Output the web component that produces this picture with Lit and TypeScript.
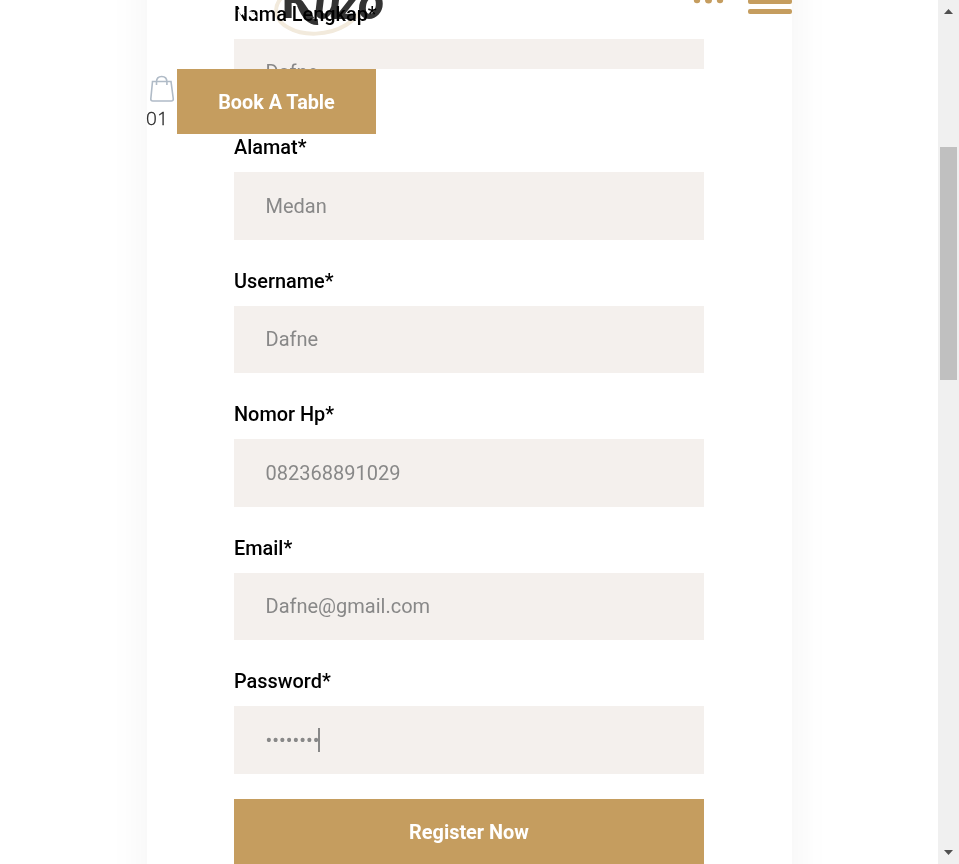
import { LitElement, html, css, svg } from "lit";
import { customElement } from "lit/decorators.js";

const fields = [
  { label: "Nama Lengkap*", value: "Dafne" },
  { label: "Alamat*", value: "Medan" },
  { label: "Username*", value: "Dafne" },
  { label: "Nomor Hp*", value: "082368891029" },
  { label: "Email*", value: "Dafne@gmail.com" },
  { label: "Password*", value: "••••••••", focused: true },
];

@customElement("app-root")
export class AppRoot extends LitElement {
  static styles = css`
    :host { display: block; position: relative; width: 100%; height: 864px; overflow: hidden; background: #fff;
      font-family: Roboto, "Liberation Sans", sans-serif; font-size: 20px; }
    * { box-sizing: border-box; }
    .page { display: flex; height: 100%; }
    .main { flex: 1; min-width: 0; overflow: hidden; display: flex; padding-left: 147px; }
    .card { flex: none; width: 645px; height: 1000px; margin-top: -60px; padding: 60px 88px 0 87px; box-shadow: 0 0 40px rgba(0,0,0,.05); }
    .form { display: flex; flex-direction: column; }
    .field { height: 133.5px; flex: none; }
    .label { height: 38.6px; line-height: 29.8px; color: #000; font-weight: 500; font-size: 19.9px; }
    .field:nth-child(even) .label { line-height: 28.8px; }
    .input { height: 67.5px; background: #f4f0ed; padding: 0 31.5px; display: flex; align-items: center; color: #888; font-size: 20px; }
    .first .input { height: 30px; align-items: flex-start; overflow: hidden; line-height: 67.5px; }
    .caret { width: 2px; height: 24px; background: #888; margin-left: -1px; }
    .submit { height: 66px; margin-top: -2px; background: #c59d5f; color: #fff; font-weight: 700; display: flex; align-items: center; justify-content: center; font-size: 19.9px; }
    .header { position: absolute; left: 147px; top: 0; width: 645px; height: 134px; }
    .brand { position: absolute; left: 230px; top: 0; mix-blend-mode: multiply; }
    .leaf { position: absolute; left: 83px; top: 0; }
    .menu { position: absolute; left: 543px; top: 0; }
    .actions { position: absolute; left: 0; top: 69px; display: flex; }
    .cart { width: 30px; padding-top: 6px; color: #222; font: 400 19px/30px "Open Sans", sans-serif; }
    .cart svg { display: block; margin-left: 2px; }
    .count { display: block; margin-left: -1px; font-weight: 300; letter-spacing: .5px; -webkit-text-stroke: .3px #222; }
    .book { width: 199px; height: 65px; padding-top: 1px; background: #c59d5f; color: #fff; font-weight: 700; font-size: 19.8px; display: flex; align-items: center; justify-content: center; }
    .scroll { width: 21px; background: #f0f0f0; display: flex; flex-direction: column; align-items: center; padding: 9px 0 9px; }
    .thumb { width: 17px; height: 233px; background: #c0c0c0; margin: 133px 0 auto; }
    .scroll svg { display: block; flex: none; }
  `;

  brand() {
    return html`<svg class="brand" width="170" height="40" viewBox="230 0 170 40">
      <path d="M282-3C272 8 275 21 289 28C303 36 328 36 346 25C357 18 364 9 365-2" fill="none" stroke="#f2eadc" stroke-width="4"/>
      <g fill="#333" font-family="Lato, sans-serif" font-weight="900">
        <text x="281" y="18" font-size="47">K</text>
        <text x="314 337 358" y="19" font-style="italic" font-size="50">uzo</text>
      </g>
      <path d="M300 5Q307 23 318 22" fill="none" stroke="#333" stroke-width="6"/>
    </svg>`;
  }

  render() {
    return html`
      <div class="page">
        <div class="main"><div class="card"><div class="form">
          ${fields.map((f, i) => html`<div class="field ${i === 0 ? "first" : ""}">
            <div class="label">${f.label}</div>
            <div class="input"><span>${f.value}</span>${f.focused ? html`<i class="caret"></i>` : ""}</div>
          </div>`)}
          <div class="submit">Register Now</div>
        </div></div></div>
        <div class="scroll">
          <svg width="9" height="5"><path d="M0 5L4.5 0L9 5z" fill="#505050"/></svg>
          <div class="thumb"></div>
          <svg width="9" height="5"><path d="M0 0L4.5 5L9 0z" fill="#505050"/></svg>
        </div>
      </div>
      ${this.brand()}
      <div class="header">
        <svg class="leaf" width="34" height="24" viewBox="230 0 34 24">
          <path d="M239 9l4 5M249.500 12q2 6 6 3" fill="none" stroke="#fff" stroke-width="4"/>
        </svg>
        <svg class="menu" width="102" height="16" viewBox="690 0 102 16" fill="#c59d5f">
          <circle cx="697" cy="0" r="3.2"/><circle cx="708.5" cy="0" r="3.5"/><circle cx="720" cy="0" r="3.2"/>
          <rect x="748" y="-1" width="44" height="5" rx="2"/><rect x="748" y="9" width="44" height="5" rx="2"/>
        </svg>
        <div class="actions">
          <div class="cart">
            <svg width="26" height="28" viewBox="149 75 26 28" fill="none" stroke="#b0bbc7" stroke-width="1.6">
              <path d="M152.500 81.500h18.500l2.300 17.500q0 2-2 2h-18.500q-2 0-2-2zM156.500 85v-3q0-5.500 5.200-5.500t5.200 5.500v3"/>
            </svg><span class="count">01</span>
          </div>
          <div class="book">Book A Table</div>
        </div>
      </div>`;
  }
}
